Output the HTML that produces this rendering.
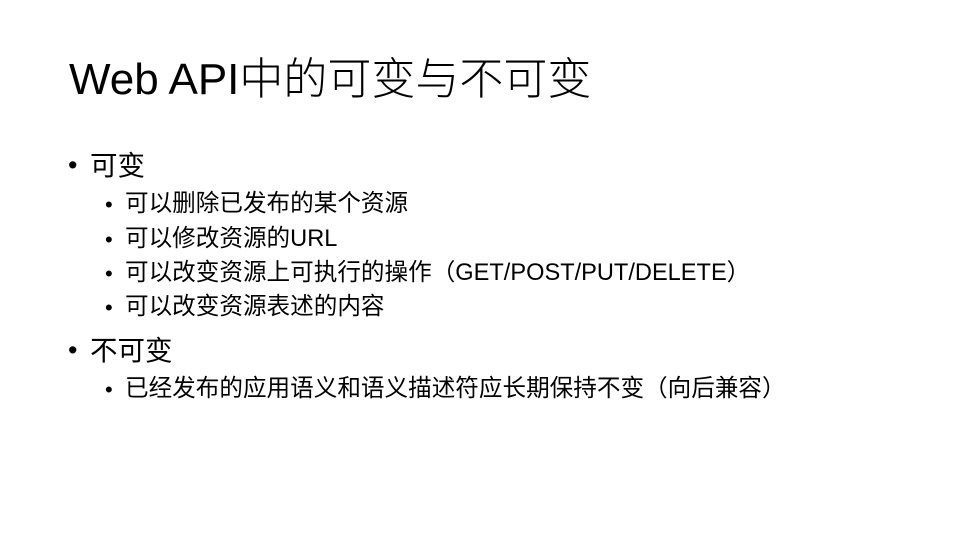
<!DOCTYPE html>
<html><head><meta charset="utf-8"><style>
html,body{margin:0;padding:0;background:#fff;}
body{width:960px;height:540px;position:relative;overflow:hidden;font-family:"Liberation Sans","Noto Sans CJK SC",sans-serif;color:#000;}
.t{position:absolute;white-space:nowrap;line-height:1;}
.title{left:69px;top:58px;font-size:44px;font-weight:300;}
.l1{font-size:27.5px;}
.l2{font-size:23.6px;}
.b{position:absolute;white-space:nowrap;line-height:1;}
</style></head><body>
<div class="t title">Web API中的可变与不可变</div>
<div class="b" style="left:68px;top:152px;font-size:27px">•</div>
<div class="t l1" style="left:90px;top:152px">可变</div>
<div class="b" style="left:105px;top:194px;font-size:22px">•</div>
<div class="t l2" style="left:125px;top:193px">可以删除已发布的某个资源</div>
<div class="b" style="left:105px;top:229px;font-size:22px">•</div>
<div class="t l2" style="left:125px;top:228px">可以修改资源的URL</div>
<div class="b" style="left:105px;top:263px;font-size:22px">•</div>
<div class="t l2" style="left:125px;top:262px">可以改变资源上可执行的操作（GET/POST/PUT/DELETE）</div>
<div class="b" style="left:105px;top:297px;font-size:22px">•</div>
<div class="t l2" style="left:125px;top:296px">可以改变资源表述的内容</div>
<div class="b" style="left:68px;top:337px;font-size:27px">•</div>
<div class="t l1" style="left:90px;top:337px">不可变</div>
<div class="b" style="left:105px;top:379px;font-size:22px">•</div>
<div class="t l2" style="left:125px;top:378px">已经发布的应用语义和语义描述符应长期保持不变（向后兼容）</div>
</body></html>
